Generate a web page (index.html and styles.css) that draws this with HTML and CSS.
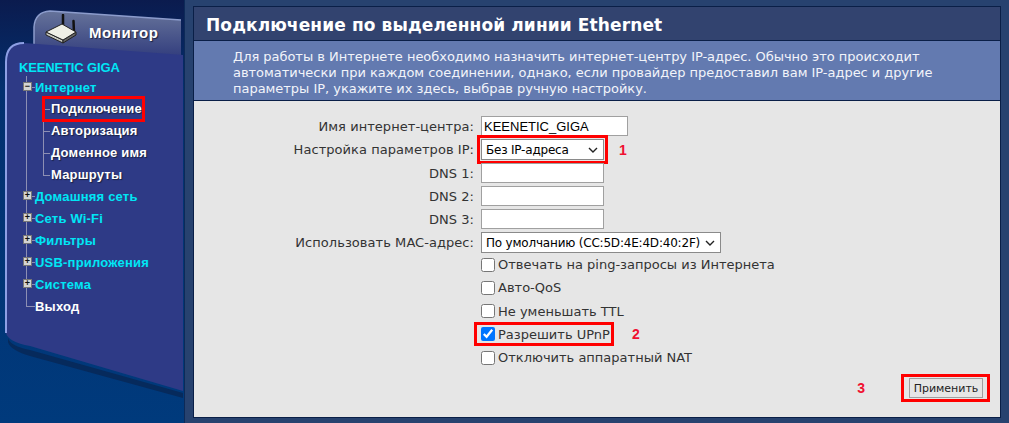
FILE: index.html
```html
<!DOCTYPE html>
<html lang="ru">
<head>
<meta charset="UTF-8">
<meta name="viewport" content="width=device-width, initial-scale=1.0">
<title>Подключение по выделенной линии Ethernet</title>
<link rel="stylesheet" href="styles.css">
</head>
<body>
<div class="page">
    <div class="side">
        <svg class="side-bg" width="185" height="423" viewBox="0 0 185 423">
            <defs>
                <linearGradient id="tabFill" x1="0" y1="0" x2="0" y2="1">
                    <stop offset="0" stop-color="#66739a"/>
                    <stop offset="1" stop-color="#2f3a7c"/>
                </linearGradient>
            </defs>
            <!-- tab -->
            <path d="M34 60 V27 Q35 12 50 11 L181 20 V60 Z" fill="url(#tabFill)"/>
            <path d="M34 44 V27 Q35 12 50 11 L181 20" fill="none" stroke="#8c9ccc" stroke-width="1.5"/>
            <!-- panel shadow -->
            <path d="M8 338 Q10 346 30 350 L183 393 L183 398 L30 356 Q10 350 8 342 Z" fill="#062a5c"/>
            <!-- panel -->
            <path d="M6 62 Q6 43 24 43 L183 55 V391 L30 346 Q8 342 6 333 Z" fill="#2e3a86"/>
            <path d="M6 333 V62 Q6 43 24 43" fill="none" stroke="#8d9fe4" stroke-width="2"/>
        </svg>

        <div class="monitor">
            <svg class="router" width="34" height="30" viewBox="0 0 34 30">
                <path d="M19 11 L19 1 M30 19 L29.5 7" stroke="#111" stroke-width="2.5" stroke-linecap="round"/>
                <path d="M2 18 L19 26 V29 L2 21 Z" fill="#c8c8c0" stroke="#222" stroke-width="1"/>
                <path d="M19 26 L32 18 V21 L19 29 Z" fill="#666" stroke="#222" stroke-width="1"/>
                <path d="M2 18 L18 10 L32 18 L19 26 Z" fill="#efefe6" stroke="#222" stroke-width="1"/>
            </svg>
            <span class="monitor-label">Монитор</span>
        </div>

        <nav class="menu">
            <div class="device">KEENETIC GIGA</div>
            <ul class="tree">
                <li>
                    <div class="node"><span class="box">−</span><a class="cyan">Интернет</a></div>
                    <ul class="sub">
                        <li class="leaf"><a class="current">Подключение</a></li>
                        <li class="leaf"><a>Авторизация</a></li>
                        <li class="leaf"><a>Доменное имя</a></li>
                        <li class="leaf"><a>Маршруты</a></li>
                    </ul>
                </li>
                <li><div class="node"><span class="box">+</span><a class="cyan">Домашняя сеть</a></div></li>
                <li><div class="node"><span class="box">+</span><a class="cyan">Сеть Wi-Fi</a></div></li>
                <li><div class="node"><span class="box">+</span><a class="cyan">Фильтры</a></div></li>
                <li><div class="node"><span class="box">+</span><a class="cyan">USB-приложения</a></div></li>
                <li><div class="node"><span class="box">+</span><a class="cyan">Система</a></div></li>
                <li class="last"><div class="node"><a class="exit">Выход</a></div></li>
            </ul>
        </nav>
    </div>

    <div class="main">
        <div class="card">
            <h1 class="card-title">Подключение по выделенной линии Ethernet</h1>
            <p class="card-desc">Для работы в Интернете необходимо назначить интернет-центру IP-адрес. Обычно это происходит автоматически при каждом соединении, однако, если провайдер предоставил вам IP-адрес и другие параметры IP, укажите их здесь, выбрав ручную настройку.</p>
            <form class="card-body">
                <div class="fields">
                    <label class="name">Имя интернет-центра:</label>
                    <input class="text wide" type="text" value="KEENETIC_GIGA">

                    <label class="name">Настройка параметров IP:</label>
                    <div class="with-note">
                        <span class="marked marked-select">
                            <select class="pick short"><option>Без IP-адреса</option></select>
                        </span>
                        <span class="note note-one">1</span>
                    </div>

                    <label class="name">DNS 1:</label>
                    <input class="text" type="text">
                    <label class="name">DNS 2:</label>
                    <input class="text" type="text">
                    <label class="name">DNS 3:</label>
                    <input class="text" type="text">

                    <label class="name">Использовать MAC-адрес:</label>
                    <select class="pick mac"><option>По умолчанию (CC:5D:4E:4D:40:2F)</option></select>
                </div>

                <div class="checks">
                    <label class="check"><input type="checkbox">Отвечать на ping-запросы из Интернета</label>
                    <label class="check"><input type="checkbox">Авто-QoS</label>
                    <label class="check"><input type="checkbox">Не уменьшать TTL</label>
                    <div class="with-note">
                        <label class="check marked marked-check"><input type="checkbox" checked>Разрешить UPnP</label>
                        <span class="note note-two">2</span>
                    </div>
                    <label class="check"><input type="checkbox">Отключить аппаратный NAT</label>
                </div>

                <div class="actions">
                    <span class="note note-three">3</span>
                    <span class="marked marked-button"><button class="apply" type="button">Применить</button></span>
                </div>
            </form>
        </div>
    </div>
</div>
</body>
</html>
```

FILE: styles.css
```css
* {
    box-sizing: border-box;
}

html, body {
    margin: 0;
    height: 100%;
    overflow: hidden;
}

body {
    font-family: "DejaVu Sans", Verdana, sans-serif;
    font-size: 13px;
    color: #333;
    background-color: #27426f;
}

.page {
    display: flex;
    height: 423px;
}

/*------------------------ Sidebar ----------------------- */
.side {
    position: relative;
    width: 185px;
    flex: none;
    background: linear-gradient(#0b1b4e 0, #03306f 90px, #003a7c 100%);
    border-right: 1px solid #0d2a58;
    font-family: "Liberation Sans", Arial, sans-serif;
    font-weight: bold;
}

.side-bg {
    position: absolute;
    left: 0;
    top: 0;
}

.monitor {
    position: relative;
    display: flex;
    align-items: center;
    height: 43px;
    padding: 21px 0 0 44px;
}

.router {
    flex: none;
    margin-bottom: 6px;
}

.monitor-label {
    margin-left: 11px;
    font-size: 15px;
    letter-spacing: 0.6px;
    color: #fff;
    text-shadow: 1px 1px 1px #1a2140;
}

.menu {
    position: relative;
    padding: 14px 0 0 19px;
    font-size: 13px;
}

.device {
    height: 20px;
    line-height: 22px;
    letter-spacing: -0.15px;
    color: #00e6f5;
}

.tree, .sub {
    list-style: none;
    margin: 0;
    padding: 0;
}

.tree {
    position: relative;
    margin-top: -1px;
    margin-left: 7px;
    border-left: 1px solid #8d8fb4;
}

.tree > li.last::after {
    content: '';
    position: absolute;
    left: -1px;
    bottom: 0;
    width: 1px;
    height: 10px;
    background-color: #2e3a86;
}

.node {
    position: relative;
    display: flex;
    align-items: center;
    height: 22px;
    padding-left: 8px;
}

.node::before {
    content: '';
    position: absolute;
    left: 0;
    top: 11px;
    width: 8px;
    border-top: 1px solid #8d8fb4;
}

.box {
    position: absolute;
    left: -4px;
    top: 6px;
    width: 9px;
    height: 9px;
    background-color: #d4d4d4;
    border: 1px solid #777;
    color: #111;
    font-size: 9px;
    line-height: 7px;
    text-align: center;
}

.node a {
    letter-spacing: 0.2px;
}

.cyan {
    color: #00e6f5;
}

.exit {
    color: #fff;
}

.sub {
    position: relative;
    margin-left: 16px;
    margin-bottom: -1px;
    border-left: 1px solid #8d8fb4;
}

.leaf {
    position: relative;
    height: 22px;
    line-height: 22px;
    padding-left: 7px;
    color: #fff;
    letter-spacing: 0.2px;
    text-shadow: 1px 1px 1px #1a2140;
}

.leaf::before {
    content: '';
    position: absolute;
    left: 0;
    top: 11px;
    width: 6px;
    border-top: 1px solid #8d8fb4;
}

.leaf:last-child::after {
    content: '';
    position: absolute;
    left: -1px;
    top: 12px;
    width: 1px;
    height: 10px;
    background-color: #2e3a86;
}

.current {
    position: relative;
    display: inline-block;
}

.current::after {
    content: '';
    box-sizing: border-box;
    position: absolute;
    left: -9px;
    top: -2px;
    width: 103px;
    height: 26px;
    border: 3px solid #f00;
}

/*------------------------ Main card ----------------------- */
.main {
    flex: 1;
    padding: 6px 8px 5px 8px;
}

.card {
    display: flex;
    flex-direction: column;
    height: 100%;
    border: 1px solid #0a1f47;
}

.card-title {
    height: 34px;
    margin: 0;
    padding: 1px 0 0 12px;
    line-height: 34px;
    font-size: 17px;
    font-weight: bold;
    letter-spacing: 0.12px;
    color: #fff;
    background-color: #32436f;
    border-bottom: 1px solid #0a1f47;
}

.card-desc {
    height: 60px;
    margin: 0;
    padding: 8px 60px 0 39px;
    line-height: 16px;
    font-size: 13px;
    letter-spacing: -0.03px;
    color: #f2f4fa;
    background-color: #637ab0;
    border-bottom: 1px solid #0a1f47;
}

.card-body {
    flex: 1;
    padding: 15px 0 0 0;
    background-color: #e6e6e6;
}

/*------------------------ Form ----------------------- */
.fields {
    display: grid;
    grid-template-columns: 280px auto;
    column-gap: 7px;
    justify-content: start;
    align-items: center;
    row-gap: 3px;
}

.name {
    text-align: right;
    white-space: nowrap;
    letter-spacing: 0.05px;
}

.text {
    width: 123px;
    height: 20px;
    padding: 1px 2px;
    border: 1px solid #a0a0a0;
    background-color: #fff;
    font-family: "Liberation Sans", Arial, sans-serif;
    font-size: 13px;
    color: #000;
}

.wide {
    width: 147px;
}

.pick {
    appearance: none;
    height: 21px;
    padding: 0 16px 0 4px;
    font-family: "DejaVu Sans", Verdana, sans-serif;
    font-size: 12px;
    letter-spacing: -0.2px;
    color: #000;
    background: #fff url("data:image/svg+xml,%3Csvg xmlns='http://www.w3.org/2000/svg' width='10' height='6'%3E%3Cpath d='M1 1l4 4 4-4' fill='none' stroke='%23222' stroke-width='1.4'/%3E%3C/svg%3E") no-repeat right 5px center;
    border: 1px solid #8a8a8a;
    border-radius: 0;
}

.short {
    width: 123px;
}

.mac {
    width: 240px;
}

.with-note {
    display: flex;
    align-items: center;
}

.marked {
    outline: 3px solid #f00;
}

.marked-select {
    display: block;
    line-height: 0;
    outline-offset: 1px;
}

.note {
    font-family: "Liberation Sans", Arial, sans-serif;
    font-weight: bold;
    font-size: 14px;
    color: #f01030;
}

.note-one {
    margin-left: 15px;
}

.note-two {
    margin-left: 21px;
}

.note-three {
    margin-right: 39px;
}

.checks {
    display: flex;
    flex-direction: column;
    gap: 4.3px;
    margin: 2px 0 0 287px;
}

.check {
    display: flex;
    align-items: center;
    height: 19px;
    width: fit-content;
    white-space: nowrap;
}

.check input {
    width: 14px;
    height: 14px;
    margin: 0 3px 0 0;
}

.marked-check {
    height: 18px;
    margin: 0.5px 0 0.5px -4px;
    padding: 0 1px 0 4px;
}

.actions {
    display: flex;
    justify-content: flex-end;
    align-items: center;
    margin-top: 10px;
    padding-right: 13px;
}

.marked-button {
    display: block;
    padding: 1px 4px 1px 5px;
    line-height: 0;
}

.apply {
    display: block;
    width: 74px;
    height: 20px;
    padding: 0;
    border: 1px solid #a0a0a0;
    background-color: #e6e6e6;
    font-family: "DejaVu Sans", Verdana, sans-serif;
    font-size: 11px;
    color: #222;
}
```
